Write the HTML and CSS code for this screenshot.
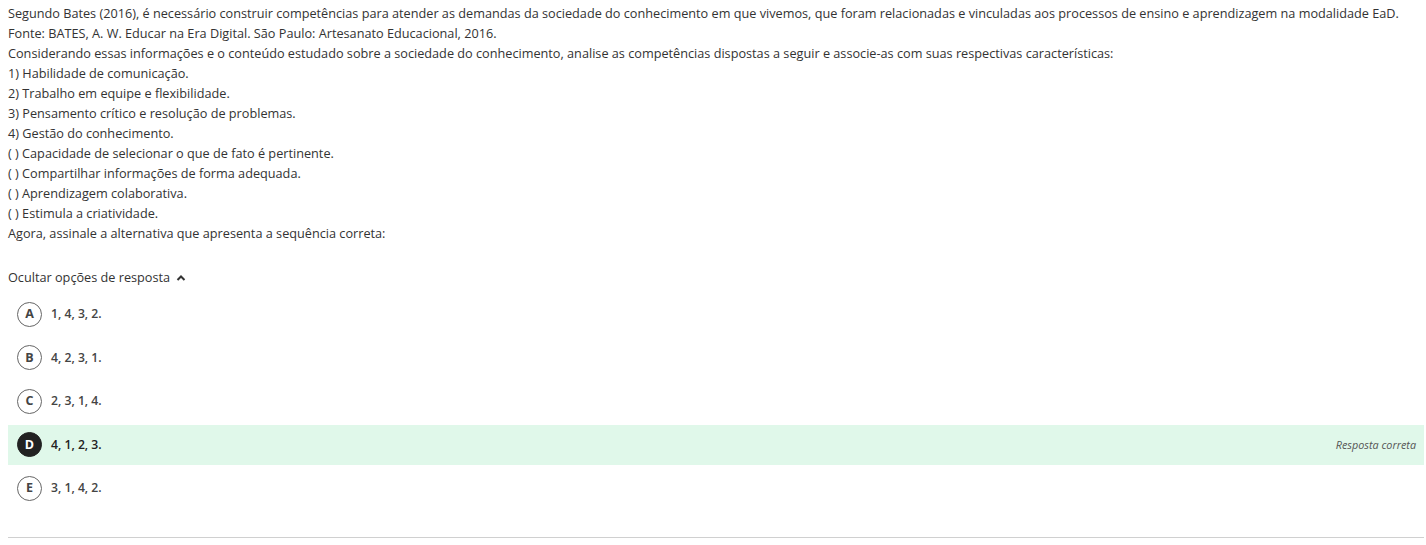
FILE: index.html
```html
<!DOCTYPE html>
<html lang="pt-BR">
<head>
<meta charset="utf-8">
<title>Questão</title>
<link rel="stylesheet" href="styles.css">
</head>
<body>
<div class="question">
  <div class="statement">
    <p>Segundo Bates (2016), é necessário construir competências para atender as demandas da sociedade do conhecimento em que vivemos, que foram relacionadas e vinculadas aos processos de ensino e aprendizagem na modalidade EaD.</p>
    <p>Fonte: BATES, A. W. Educar na Era Digital. São Paulo: Artesanato Educacional, 2016.</p>
    <p>Considerando essas informações e o conteúdo estudado sobre a sociedade do conhecimento, analise as competências dispostas a seguir e associe-as com suas respectivas características:</p>
    <p>1) Habilidade de comunicação.</p>
    <p>2) Trabalho em equipe e flexibilidade.</p>
    <p>3) Pensamento crítico e resolução de problemas.</p>
    <p>4) Gestão do conhecimento.</p>
    <p>( ) Capacidade de selecionar o que de fato é pertinente.</p>
    <p>( ) Compartilhar informações de forma adequada.</p>
    <p>( ) Aprendizagem colaborativa.</p>
    <p>( ) Estimula a criatividade.</p>
    <p>Agora, assinale a alternativa que apresenta a sequência correta:</p>
  </div>
  <button class="toggle" type="button">Ocultar opções de resposta
    <svg class="chev" width="10" height="10" viewBox="0 0 10 10"><path d="M1.5 7 L5 3.5 L8.5 7" fill="none" stroke="#333" stroke-width="2"/></svg>
  </button>
  <ul class="options">
    <li class="option"><span class="letter">A</span><span class="text">1, 4, 3, 2.</span></li>
    <li class="option"><span class="letter">B</span><span class="text">4, 2, 3, 1.</span></li>
    <li class="option"><span class="letter">C</span><span class="text">2, 3, 1, 4.</span></li>
    <li class="option correct"><span class="letter">D</span><span class="text">4, 1, 2, 3.</span><span class="tag">Resposta correta</span></li>
    <li class="option"><span class="letter">E</span><span class="text">3, 1, 4, 2.</span></li>
  </ul>
</div>
</body>
</html>
```

FILE: styles.css
```css
* { box-sizing: border-box; }
html, body { margin: 0; padding: 0; background: #fff; }
body {
  font-family: "Open Sans", "DejaVu Sans", sans-serif;
  color: #333;
  font-size: 12.7px;
  line-height: 20px;
  padding: 3px 2px 0 8px;
}
.statement p { margin: 0; }
.toggle {
  display: flex;
  align-items: center;
  gap: 6px;
  margin-top: 24px;
  padding: 0;
  border: 0;
  background: none;
  font-family: inherit;
  font-size: 12.7px;
  line-height: 20px;
  color: #333;
}
.chev { display: block; margin-top: 2px; }
.options {
  list-style: none;
  margin: 7px 0 0 0;
  padding: 0;
  border-bottom: 1px solid #d0d0d0;
  padding-bottom: 25px;
}
.option {
  display: flex;
  align-items: center;
  height: 40px;
  padding: 0 8px 0 9px;
  margin-bottom: 3.5px;
}
.letter {
  width: 25px;
  height: 25px;
  border: 1px solid #666;
  border-radius: 50%;
  display: flex;
  align-items: center;
  justify-content: center;
  font-weight: 700;
  font-size: 12.5px;
  color: #444;
  flex: none;
}
.text {
  margin-left: 9px;
  font-weight: 600;
  font-size: 12.2px;
  color: #444;
}
.correct { background: #e0f8ea; }
.correct .letter { background: #222; border-color: #222; color: #fff; }
.correct .text { color: #222; }
.tag {
  margin-left: auto;
  font-style: italic;
  font-size: 10.8px;
  color: #555;
}
```
